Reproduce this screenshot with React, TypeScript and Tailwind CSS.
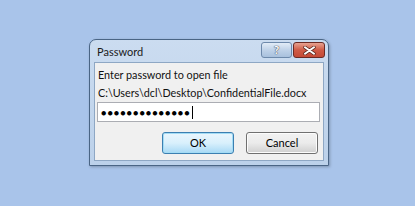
export default function App() {
  const font = { fontFamily: 'Lato, "Noto Sans", sans-serif' };
  return (
    <div className="h-[206px] w-[415px] bg-[#a9c4ea] pl-[89px] pt-[39px]" style={font}>
      <div className="flex h-[127px] w-[240px] flex-col rounded-t-[7px] border border-[#4a6585] bg-gradient-to-b from-[#cbdcf0] to-[#bcd1ea] shadow-[1px_1px_3px_rgba(0,0,0,0.25)]">
        {/* title bar */}
        <div className="flex h-[22px] justify-between pl-[7px] pr-[3px]">
          <span className="pt-[6px] text-[11px] leading-none text-[#1a1a1a]">Password</span>
          <div className="flex gap-[1px] pt-[2px]">
            <div className="flex h-[16px] w-[31px] items-center justify-center rounded-[3px] border border-[#6d89ab] bg-gradient-to-b from-[#e2ecf7] via-[#bfd2e8] to-[#a8c0dd]">
              <span className="text-[12px] font-bold leading-none text-white [text-shadow:0_0_1px_#334,0_0_1px_#334]">?</span>
            </div>
            <div className="flex h-[16px] w-[32px] items-center justify-center rounded-[3px] border border-[#6b2a24] bg-gradient-to-b from-[#e7a291] via-[#cf5a45] to-[#c44a36]">
              <svg width="13" height="9" viewBox="0 0 13 9">
                <path d="M2 1.3 L11 7.7 M11 1.3 L2 7.7" stroke="#5a2a22" strokeWidth="3.4" strokeLinecap="round" />
                <path d="M2 1.3 L11 7.7 M11 1.3 L2 7.7" stroke="#ffffff" strokeWidth="2" strokeLinecap="round" />
              </svg>
            </div>
          </div>
        </div>
        {/* client area */}
        <div className="mx-[4px] mb-[4px] flex flex-1 flex-col border border-[#8ea7c4] bg-[#f0f0f0] px-[2px] pt-[3px]">
          <p className="pl-[1px] text-[10.8px] leading-[18px] text-[#111]">Enter password to open file</p>
          <p className="pl-[1px] text-[10.8px] leading-[18px] text-[#111]">C:\Users\dcl\Desktop\ConfidentialFile.docx</p>
          <div className="flex h-[20px] w-[223px] items-center border border-[#abadb3] bg-white pl-[3px]">
            <span className="text-[9px] leading-none tracking-[1px] text-black">●●●●●●●●●●●●●●</span>
            <span className="ml-[1px] h-[13px] w-[1px] bg-black" />
          </div>
          <div className="mt-[10px] flex justify-end gap-[12px] pr-[3px]">
            <button className="flex h-[22px] w-[72px] items-center justify-center rounded-[3px] border border-[#3c7fb1] bg-gradient-to-b from-[#eaf6fd] via-[#d9f0fc] to-[#a7d9f5] text-[11px] text-black shadow-[inset_0_0_0_1px_#a3dcf5]">
              OK
            </button>
            <button className="flex h-[22px] w-[72px] items-center justify-center rounded-[3px] border border-[#707070] bg-gradient-to-b from-[#f2f2f2] via-[#ebebeb] to-[#cfcfcf] text-[11px] text-black shadow-[inset_0_0_0_1px_#fcfcfc]">
              Cancel
            </button>
          </div>
        </div>
      </div>
    </div>
  );
}
